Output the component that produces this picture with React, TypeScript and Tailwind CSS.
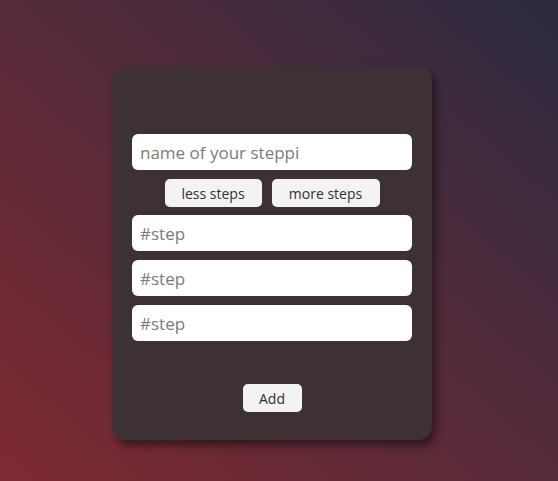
export default function App() {
  const inputCls =
    "w-[280px] h-[36px] rounded-[6px] bg-white px-[8px] text-[17px] text-[#333] placeholder:text-[#7b7b7b] outline-none";
  const btnCls =
    "h-[28px] rounded-[5px] bg-[#f3f3f3] text-[14px] text-[#2f2f2f]";
  return (
    <div className="w-[558px] h-[481px] overflow-hidden bg-[linear-gradient(to_top_right,#7f2a32,#5a2a38_45%,#2c2b40)] font-['Open_Sans',sans-serif]">
      <div className="pt-[66px] pl-[112px]">
        <div className="w-[320px] h-[374px] rounded-[14px] bg-[#3d3135] shadow-[4px_6px_8px_rgba(0,0,0,0.45)] px-[20px] pt-[68px] flex flex-col items-center">
          <input className={inputCls} placeholder="name of your steppi" />
          <div className="flex gap-[10px] mt-[9px]">
            <button className={`${btnCls} w-[97px]`}>less steps</button>
            <button className={`${btnCls} w-[108px]`}>more steps</button>
          </div>
          <div className="flex flex-col gap-[9px] mt-[8px]">
            <input className={inputCls} placeholder="#step" />
            <input className={inputCls} placeholder="#step" />
            <input className={inputCls} placeholder="#step" />
          </div>
          <button className={`${btnCls} mt-[43px] w-[59px]`}>Add</button>
        </div>
      </div>
    </div>
  );
}
